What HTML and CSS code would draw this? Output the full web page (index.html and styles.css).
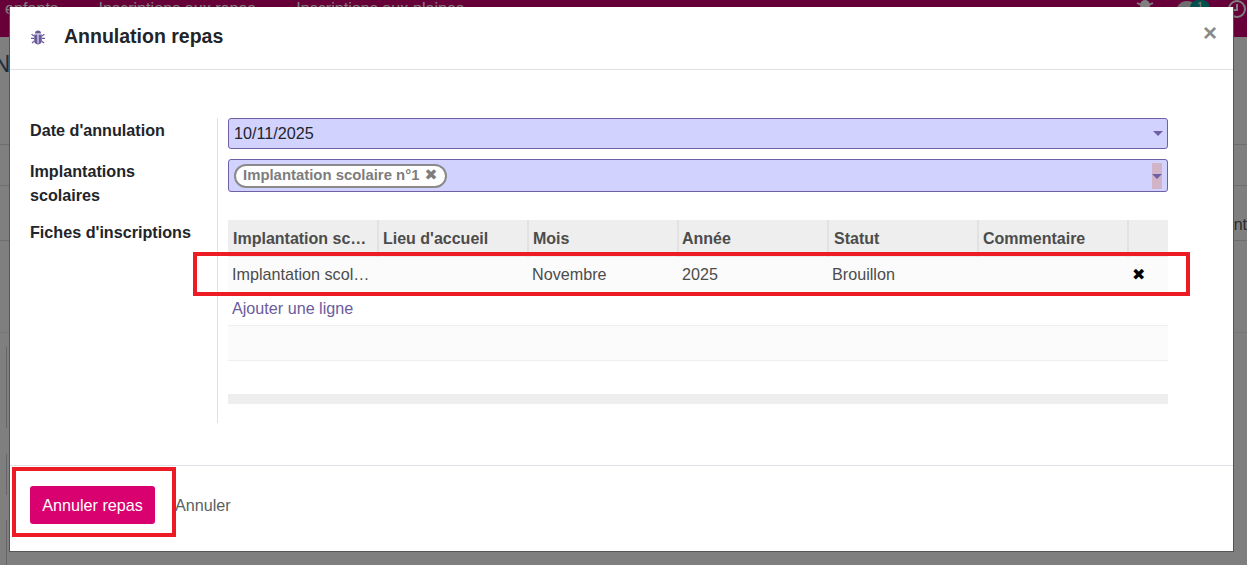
FILE: index.html
```html
<!DOCTYPE html>
<html lang="fr">
<head>
<meta charset="utf-8">
<title>Annulation repas</title>
<link rel="stylesheet" href="styles.css">
</head>
<body>
<div class="page">
  <nav class="nav">
    <span class="nav-item">enfants</span>
    <span class="nav-item">Inscriptions aux repas</span>
    <span class="nav-item">Inscriptions aux plaines</span>
    <span class="nav-icons">
      <svg class="nav-svg" width="24" height="14" viewBox="0 0 24 14"><ellipse cx="12" cy="8" rx="5" ry="5" fill="#fff"/><path d="M4 6q8 5 16 0" stroke="#fff" stroke-width="2" fill="none"/></svg>
      <span class="nav-avatar"></span>
      <span class="nav-badge">1</span>
      <svg class="nav-clock" width="22" height="22" viewBox="0 0 22 22"><circle cx="11" cy="9" r="8" fill="none" stroke="#fff" stroke-width="2"/><path d="M11 4v6h-4" fill="none" stroke="#fff" stroke-width="2"/></svg>
    </span>
  </nav>
  <div class="bg-row bg-title"><span class="bg-n">N</span></div>
  <div class="bg-row bg-r2"></div>
  <div class="bg-row bg-r3"></div>
  <div class="bg-row bg-r4"><span class="bg-ant">ant</span></div>
  <div class="bg-row bg-r5"></div>
  <div class="bg-cards">
    <div class="bg-card c1"></div>
    <div class="bg-card c2"></div>
    <div class="bg-card c3"></div>
  </div>
</div>
<div class="backdrop"></div>

<section class="modal">
  <header class="modal-head">
    <svg class="bug" width="16" height="16" viewBox="0 0 16 16">
      <path d="M5 4.6a3 3 0 0 1 6 0z" fill="#6b5b9d"/>
      <path d="M4.2 5.4h7.6v6.2a3.8 3.8 0 0 1-7.6 0z" fill="#6b5b9d"/>
      <path d="M8 5.4v9" stroke="#fff" stroke-width="1"/>
      <path d="M4 7 1.6 5.2M12 7l2.4-1.8M4 9.4H1M12 9.4h3M4.4 12l-2.4 2M11.6 12l2.4 2" stroke="#6b5b9d" stroke-width="1.2" fill="none"/>
    </svg>
    <h1 class="modal-title">Annulation repas</h1>
    <span class="close">×</span>
  </header>

  <div class="modal-body">
    <div class="form">
      <div class="label r1">Date d'annulation</div>
      <div class="field r1">
        <div class="input date"><span class="date-value">10/11/2025</span><i class="caret"></i></div>
      </div>
      <div class="label r2">Implantations scolaires</div>
      <div class="field r2">
        <div class="input tags">
          <span class="tag">Implantation scolaire n°1 <b class="tag-x">✖</b></span>
          <span class="caret-box"><i class="caret"></i></span>
        </div>
      </div>
      <div class="label r3">Fiches d'inscriptions</div>
      <div class="field r3">
        <table class="grid">
          <colgroup>
            <col class="w150"><col class="w150"><col class="w150"><col class="w150"><col class="w150"><col class="w150"><col>
          </colgroup>
          <thead>
            <tr><th>Implantation sc…</th><th>Lieu d'accueil</th><th>Mois</th><th class="th-year">Année</th><th class="th-status">Statut</th><th>Commentaire</th><th></th></tr>
          </thead>
          <tbody>
            <tr class="row-data"><td>Implantation scol…</td><td></td><td>Novembre</td><td>2025</td><td>Brouillon</td><td></td><td class="del">✖</td></tr>
            <tr class="row-add"><td colspan="7"><span class="add">Ajouter une ligne</span></td></tr>
            <tr class="row-empty alt"><td colspan="7"></td></tr>
            <tr class="row-empty"><td colspan="7"></td></tr>
          </tbody>
          <tfoot><tr><td colspan="7"></td></tr></tfoot>
        </table>
      </div>
    </div>
  </div>

  <footer class="modal-foot">
    <button class="btn-primary" type="button">Annuler repas</button>
    <span class="btn-link">Annuler</span>
  </footer>
</section>

<div class="mark mark-row"></div>
<div class="mark mark-btn"></div>
</body>
</html>
```
FILE: styles.css
```css
* { box-sizing: border-box; }
html, body { margin: 0; height: 100%; overflow: hidden; }
body { font-family: "Liberation Sans", Arial, sans-serif; font-size: 16.16px; color: #212529; background: #fff; }

/* page behind the dialog */
.page { height: 565px; overflow: hidden; }
.nav { display: flex; height: 37px; background: #cf0072; color: #fff; line-height: 16px; padding-left: 5px; position: relative; }
.nav-item { margin-right: 40.5px; white-space: nowrap; }
.nav-icons { margin-left: auto; display: flex; align-items: flex-start; }
.nav-svg { margin-right: 19px; margin-top: -3px; }
.nav-avatar { width: 22px; height: 22px; border-radius: 50%; background: #ddd; margin-top: 1px; margin-right: -8px; }
.nav-badge { width: 20px; height: 16px; background: #00a09d; font-size: 12px; line-height: 14px; text-align: center; border-radius: 8px; margin-right: 16px; }
.nav-clock { margin-right: -1px; margin-top: 0; }

.bg-row { border-bottom: 1px solid #ddd; position: relative; }
.bg-title { height: 108px; padding-top: 13px; }
.bg-n { font-size: 24px; line-height: 28px; color: #3d5c75; margin-left: -7px; display: block; }
.bg-r2 { height: 41px; }
.bg-r3 { height: 55px; }
.bg-r4 { height: 0; border: 0; }
.bg-ant { position: absolute; right: 0; top: -26px; color: #555; font-size: 16px; line-height: 20px; }
.bg-r5 { height: 92px; border-bottom-color: #eee; }
.bg-cards { padding: 14px 0 0 6px; display: flex; flex-direction: column; }
.bg-card { border-left: 1px solid #ccc; }
.c1 { height: 81px; margin-bottom: 26px; }
.c2 { height: 41px; margin-bottom: 25px; }
.c3 { height: 60px; }

.backdrop { position: fixed; inset: 0; background: rgba(0, 0, 0, .5); }

/* dialog */
.modal { position: fixed; left: 9px; top: 7px; width: 1225px; height: 545px; background: #fff; border: 1px solid #555; border-top: 0; display: flex; flex-direction: column; }
.modal-head { height: 63px; flex: none; display: flex; align-items: center; border-bottom: 1px solid #dee2e6; padding: 0 16px 5px 20px; }
.bug { margin-right: 18px; margin-top: 3px; flex: none; }
.modal-title { margin: 0; font-size: 19.5px; line-height: 24px; font-weight: 700; color: #212529; }
.close { margin-left: auto; font-size: 24px; font-weight: 700; line-height: 24px; color: #8a8a8a; margin-top: -5px; }

.modal-body { flex: 1; padding: 48px 0 0 20px; }
.form { display: grid; grid-template-columns: 188px 951px; grid-template-rows: 41px 61px 203px; }
.label { font-weight: 700; line-height: 24px; color: #212529; border-right: 1px solid #dee2e6; padding-right: 20px; }
.field { padding-left: 10px; }

.input { background: #d2d2ff; border: 1px solid #6f5fa6; border-radius: 3px; display: flex; align-items: center; position: relative; width: 940px; }
.date { height: 31px; padding-left: 5px; line-height: 28px; }
.date-value { margin-top: -2px; }
.tags { height: 33px; padding-left: 5px; }
.caret { width: 0; height: 0; border-left: 5.5px solid transparent; border-right: 5.5px solid transparent; border-top: 5px solid #6f5fa6; display: block; }
.date .caret { margin-left: auto; margin-right: 4px; }
.caret-box { margin-left: auto; margin-right: 5px; width: 10px; height: 26px; background: #d2b4c8; display: flex; align-items: center; justify-content: center; flex: none; padding-top: 2px; }
.tag { background: #fff; border: 2px solid #8a8a8a; border-radius: 13px; height: 24px; line-height: 18px; padding: 0 7px; font-size: 14.9px; font-weight: 700; color: #7d7d7d; white-space: nowrap; }
.tag-x { font-size: 15.5px; margin-left: 1px; font-family: "DejaVu Sans", sans-serif; }

.grid { width: 940px; table-layout: fixed; border-collapse: collapse; }
.w150 { width: 150px; }
.grid th { height: 37px; background: #eeeeee; border-right: 2px solid #e2e2e2; text-align: left; padding: 0 4px; font-weight: 700; font-size: 16px; color: #4c4c4c; white-space: nowrap; overflow: hidden; }
.grid th:first-child { padding-left: 5px; }
.grid th.th-year { padding-left: 3px; }
.grid th.th-status { padding-left: 5px; }
.grid th:last-child { border-right: 0; }
.row-data td { height: 35px; background: #fbfbfb; padding: 0 4px; color: #4c4c4c; white-space: nowrap; border-bottom: 1px solid #e9ecef; }
.row-data td.del { color: #000; text-align: left; font-size: 16px; font-family: "DejaVu Sans", sans-serif; padding: 1px 0 0 4px; }
.row-add td { height: 33px; padding: 0 4px; border-bottom: 1px solid #eeeeee; }
.add { color: #6b5b9d; }
.row-empty td { height: 35px; border-bottom: 1px solid #eeeeee; }
.row-empty.alt td { background: #fbfbfb; }
.row-empty:last-child td { height: 34px; border-bottom: 0; }
.grid tfoot td { height: 10px; background: #eeeeee; padding: 0; }

.modal-foot { flex: none; height: 86px; border-top: 1px solid #dee2e6; display: flex; align-items: flex-start; padding: 20px 0 0 20px; }
.btn-primary { width: 125px; height: 38px; background: #d9006f; color: #fff; border: 0; border-radius: 3px; font: inherit; padding: 0; }
.btn-link { margin-left: 20px; color: #5b5f63; line-height: 38px; }

/* red annotations drawn on the screenshot */
.mark { position: fixed; border: 4px solid #ed1c24; pointer-events: none; }
.mark-row { left: 193px; top: 252px; width: 997px; height: 44px; }
.mark-btn { left: 12px; top: 467px; width: 164px; height: 70px; }
```
